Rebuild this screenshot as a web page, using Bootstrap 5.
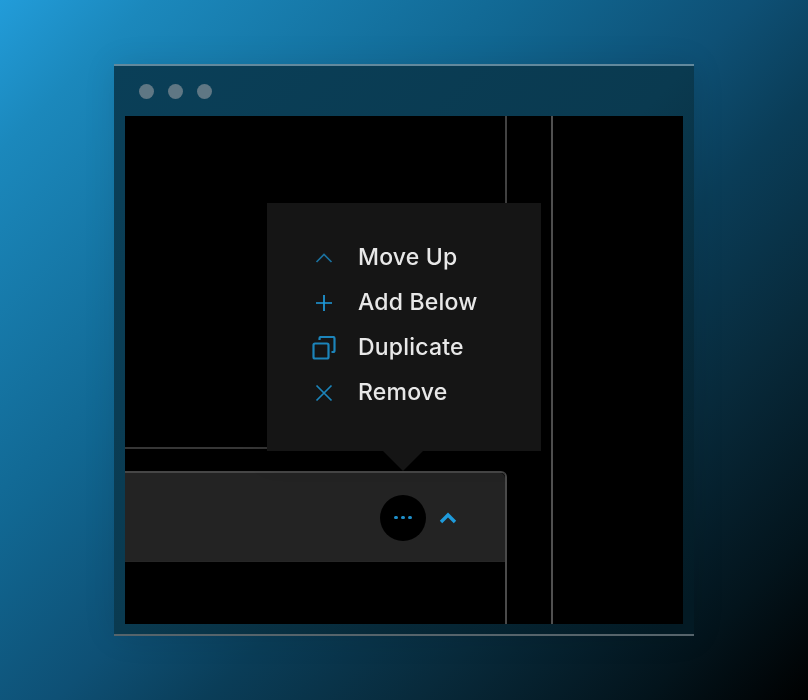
<!doctype html>
<html lang="en">
<head>
<meta charset="utf-8">
<title>Menu</title>
<link href="https://cdn.jsdelivr.net/npm/bootstrap@5.3.0/dist/css/bootstrap.min.css" rel="stylesheet">
<style>
html, body { height: 100%; }
body {
  margin: 0; overflow: hidden;
  font-family: Inter, "Liberation Sans", sans-serif;
  background: linear-gradient(135deg, #229cd9 0%, #1b88bc 10%, #116792 35%, #0e5075 50%, #0a3d58 60%, #082a3b 74%, #03141c 89%, #000 100%);
}
.app-window {
  width: 580px; height: 572px; margin: 64px 0 0 114px;
  border-top: 2px solid #62899d;
  border-bottom: 2px solid #56646b;
  background: linear-gradient(135deg, #0a3f58 0%, #0a3a50 50%, #072a3a 72%, #031a24 97%);
  box-shadow: 0 0 30px rgba(0,0,0,.1);
  padding: 0 11px 10px;
}
.title-strip { height: 50px; padding-left: 14px; gap: 14px; }
.win-dot { width: 15px; height: 15px; border-radius: 50%; background: #5f7784; }
.screen-area { height: 508px; background: #000; }
.left-pane { width: 382px; }
.upper-block { height: 333px; border-right: 2px solid #424242; border-bottom: 2px solid #363636; }
.lower-block { margin-top: 22px; border-top: 2px solid #464646; border-right: 2px solid #4a4a4a; border-top-right-radius: 6px; }
.bar-panel { height: 89px; background: #232323; border-bottom: 1px solid #262626; padding: 1px 47px 0 0; gap: 12px; border-top-right-radius: 5px; }
.right-pane { margin-left: 44px; border-left: 2px solid #505050; }
.more-btn { width: 46px; height: 46px; border-radius: 50%; background: #000; border: 0; padding: 0; gap: 3.5px; }
.more-dot { width: 3.5px; height: 3.5px; border-radius: 50%; background: #1f8fca; }
.pop-menu {
  left: 142px; top: 87px; width: 274px; height: 248px;
  background: #151515; padding: 32px 0 0 44.5px;
  box-shadow: 0 6px 24px rgba(0,0,0,.2);
  filter: blur(.5px);
}
.pop-menu::after {
  content: ""; position: absolute; left: 116px; top: 248px;
  border-style: solid; border-width: 20px 20px 0; border-color: #151515 transparent transparent;
}
.pop-item { height: 45px; gap: 22.5px; color: #e8e8e8; font-size: 23px; font-weight: 500; letter-spacing: .2px; line-height: 45px; }
.pop-icon { width: 24px; height: 24px; flex: none; }
.pop-icon path, .pop-icon rect { fill: none; stroke-width: 1.7; }
.pop-icon .thick-line { stroke-width: 2.2; }
.tone-dim { stroke: #1b719f; }
.tone-bright { stroke: #1f9bdb; }
.tone-mid { stroke: #1c84ba; }
</style>
</head>
<body>
<div class="app-window">
  <div class="title-strip d-flex align-items-center">
    <span class="win-dot"></span><span class="win-dot"></span><span class="win-dot"></span>
  </div>
  <div class="screen-area d-flex position-relative">
    <div class="left-pane d-flex flex-column">
      <div class="upper-block"></div>
      <div class="lower-block flex-grow-1">
        <div class="bar-panel d-flex align-items-center justify-content-end">
          <button class="more-btn d-flex align-items-center justify-content-center" type="button" aria-label="More">
            <span class="more-dot"></span><span class="more-dot"></span><span class="more-dot"></span>
          </button>
          <svg width="20" height="14" viewBox="0 0 20 14" aria-hidden="true"><path d="M3 11 L10 4 L17 11" fill="none" stroke="#1f9bdb" stroke-width="3.4"/></svg>
        </div>
      </div>
    </div>
    <div class="right-pane flex-grow-1"></div>
    <div class="pop-menu position-absolute">
      <ul class="list-unstyled m-0">
        <li class="pop-item d-flex align-items-center">
          <svg class="pop-icon" viewBox="0 0 24 24"><path class="tone-dim" d="M4.5 16 L12 8.5 L19.5 16"/></svg>Move Up
        </li>
        <li class="pop-item d-flex align-items-center">
          <svg class="pop-icon" viewBox="0 0 24 24"><path class="tone-bright" d="M12 4 V20 M4 12 H20"/></svg>Add Below
        </li>
        <li class="pop-item d-flex align-items-center">
          <svg class="pop-icon" viewBox="0 0 24 24"><rect class="tone-mid thick-line" x="1.5" y="7.5" width="15" height="15" rx="1.5"/><path class="tone-mid thick-line" d="M7.5 4 V2.5 A1.5 1.5 0 0 1 9 1 H21 A1.5 1.5 0 0 1 22.5 2.5 V14.5 A1.5 1.5 0 0 1 21 16 H19.5"/></svg>Duplicate
        </li>
        <li class="pop-item d-flex align-items-center">
          <svg class="pop-icon" viewBox="0 0 24 24"><path class="tone-mid" d="M4.5 4.5 L19.5 19.5 M19.5 4.5 L4.5 19.5"/></svg>Remove
        </li>
      </ul>
    </div>
  </div>
</div>
<script src="https://cdn.jsdelivr.net/npm/bootstrap@5.3.0/dist/js/bootstrap.bundle.min.js"></script>
</body>
</html>
